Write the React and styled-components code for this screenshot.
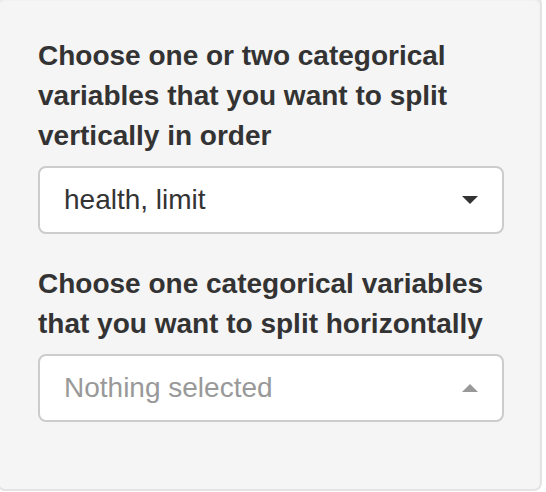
import React from "react";
import styled, { createGlobalStyle } from "styled-components";

const Global = createGlobalStyle`
  html, body { margin: 0; padding: 0; background: #ffffff; overflow: hidden; }
  body { font-family: "Liberation Sans", Arial, sans-serif; color: #333333; }
  * { box-sizing: border-box; }
`;

const Well = styled.div`
  width: 545px;
  margin: -4px 0 0 -3px;
  padding: 38px 36px 37px 39px;
  background: #f5f5f5;
  border: 2px solid #e3e3e3;
  border-radius: 8px;
  box-shadow: inset 0 2px 2px rgba(0, 0, 0, 0.05);
`;

const FormGroup = styled.div`
  margin-bottom: 30px;
`;

const Label = styled.label`
  display: inline-block;
  max-width: 100%;
  margin-bottom: 10px;
  font-size: 28px;
  line-height: 40px;
  font-weight: bold;
  color: #333333;
`;

const SelectButton = styled.div`
  display: flex;
  align-items: center;
  justify-content: space-between;
  height: 68px;
  padding: 12px 24px;
  background: #ffffff;
  border: 2px solid #cccccc;
  border-radius: 8px;
  font-size: 28px;
  line-height: 40px;
  color: ${(p) => (p.$placeholder ? "#999999" : "#333333")};
`;

const Caret = styled.span`
  width: 0;
  height: 0;
  border-left: 8px solid transparent;
  border-right: 8px solid transparent;
  ${(p) =>
    p.$up
      ? `border-bottom: 8px solid ${p.$color};`
      : `border-top: 8px solid ${p.$color};`}
`;

export default function App() {
  return (
    <>
      <Global />
      <Well>
        <FormGroup>
          <Label>Choose one or two categorical variables that you want to split vertically in order</Label>
          <SelectButton>
            <span>health, limit</span>
            <Caret $color="#333333" />
          </SelectButton>
        </FormGroup>
        <FormGroup>
          <Label>Choose one categorical variables that you want to split horizontally</Label>
          <SelectButton $placeholder>
            <span>Nothing selected</span>
            <Caret $up $color="#999999" />
          </SelectButton>
        </FormGroup>
      </Well>
    </>
  );
}
